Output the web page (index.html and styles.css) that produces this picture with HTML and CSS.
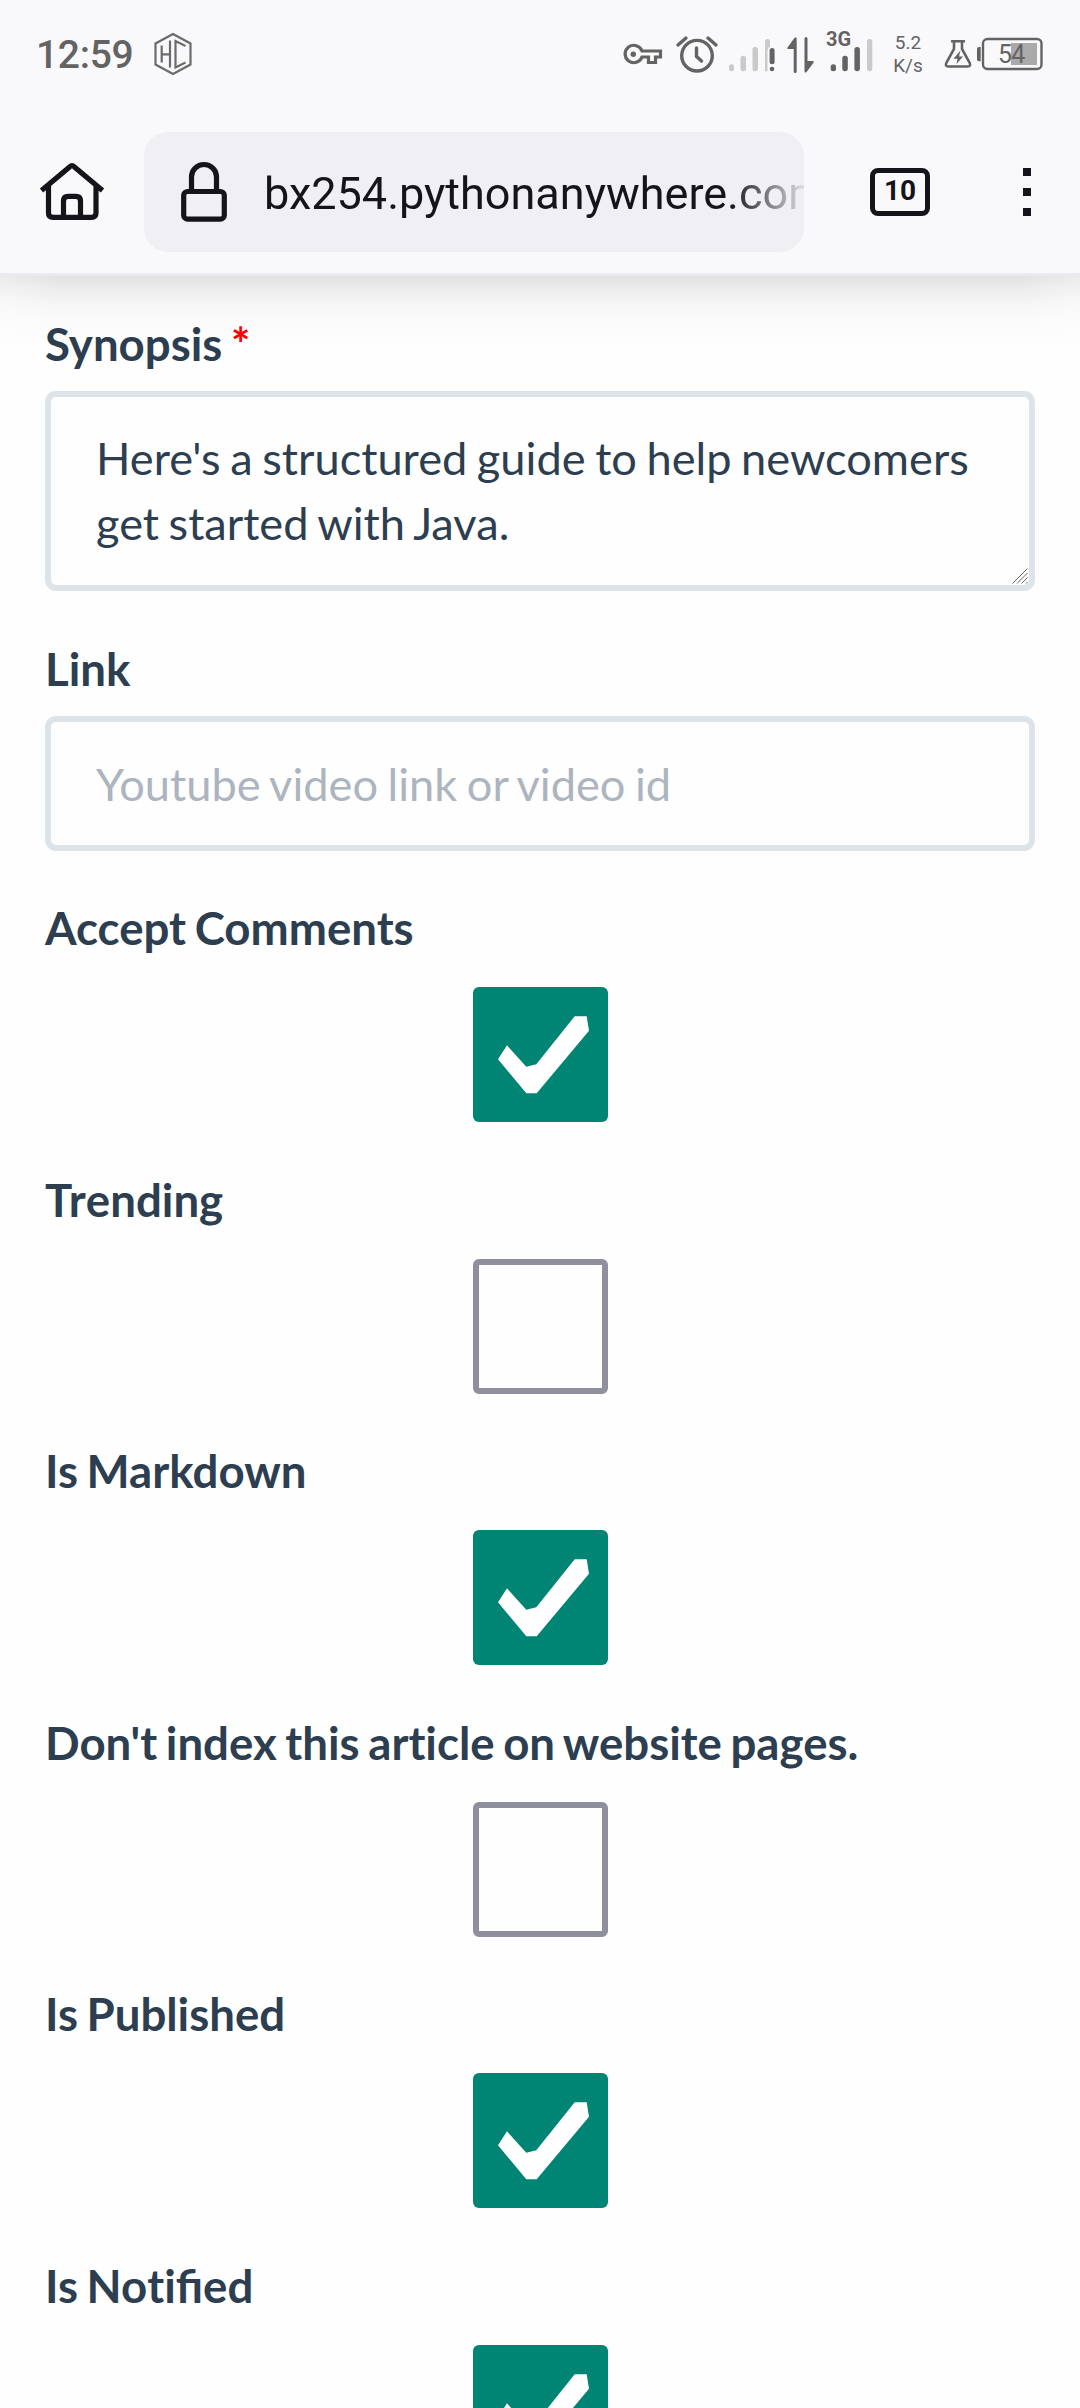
FILE: index.html
```html
<!DOCTYPE html>
<html lang="en">
<head>
<meta charset="utf-8">
<title>Edit article</title>
<link rel="stylesheet" href="styles.css">
</head>
<body>
<header class="chrome">
  <div class="status">
    <span class="clock">12:59</span>
    <svg class="hc" width="38" height="48" viewBox="154 30 38 48"><path d="M173 34 190.500 43.500V64.500L173 74 155.500 64.500V43.500Z"/><path d="M161.700 45.500V62.500M161.700 54.300H170M170 40.500V67.500M185.500 46 175.500 41V67.500L185.500 62.500"/></svg>
    <svg class="key" width="40" height="48" viewBox="623 30 40 48"><path d="M642 51H660.500V57H655.500V62.500H648.500V57H642A8.700 8.700 0 1 1 642 51Z"/><circle class="solid" cx="633.300" cy="54.200" r="2.700"/></svg>
    <svg class="alarm" width="42" height="48" viewBox="676 30 42 48"><circle cx="697" cy="55.700" r="15.300"/><path d="M696.500 48V56.500L701.500 61M678 45 686 38M716 45 708 38"/></svg>
    <svg class="sig1" width="48" height="48" viewBox="728 30 48 48"><g class="faint"><rect x="729" y="64.300" width="5" height="7" rx="2.500"/><rect x="740.500" y="55.700" width="5.500" height="15.500" rx="2.600"/><rect x="752.500" y="47" width="5.500" height="24.200" rx="2.600"/><path d="M765 71.200V41.500a2.500 2.500 0 0 1 5 0V46.500Q767.500 48 767.500 51V71.200Z"/></g><rect x="769.600" y="48" width="5" height="16.300" rx="2.500"/><circle cx="772" cy="69" r="2.300"/></svg>
    <svg class="arrows" width="28" height="48" viewBox="787 30 28 48"><path d="M796.700 71.500a1.500 1.500 0 0 1-3-0V49H788q-1.300-.5-.5-1.500L794 38.500q2.700-3 2.700 1ZM804.500 38.500a1.500 1.500 0 0 1 3 0V61H813q1.500.5.5 1.800L807 71.500q-2.500 2.500-2.500-.5Z"/></svg>
    <svg class="sig2" width="48" height="48" viewBox="826 30 48 48"><text class="net" x="826" y="46">3G</text><rect x="830.700" y="64.300" width="5.300" height="7" rx="2.500"/><rect x="842.300" y="55.700" width="5.500" height="15.500" rx="2.600"/><rect x="854.400" y="47" width="5.500" height="24.200" rx="2.600"/><rect class="faint" x="867" y="39" width="5.300" height="32.200" rx="2.600"/></svg>
    <span class="speed">5.2<br>K/s</span>
    <svg class="flask" width="28" height="48" viewBox="944 30 28 48"><path d="M952 41.300H964M954 41.300V49L946.500 62.500Q944.500 66.500 948.500 66.500H967.500Q971.500 66.500 969.500 62.500L962 49V41.300"/><path class="solid" d="M960.500 50.500 953.500 58.700H957.500L956.500 64 963 56.500H959Z"/></svg>
    <svg class="battery" width="68" height="48" viewBox="976 30 68 48"><path d="M980.700 47V61.300H979a2 2 0 0 1-2-2V49a2 2 0 0 1 2-2Z"/><rect class="charge" x="1011" y="43" width="26" height="22"/><rect class="case" x="983" y="39" width="58.500" height="30" rx="4.500"/><text class="level" x="998" y="62.700">54</text></svg>
  </div>
  <div class="toolbar">
    <svg class="home" width="66" height="60" viewBox="39 161 66 60"><path d="M41.500 189.500 69.500 166Q72 163.500 74.500 166L102.500 189.500M48.500 185V212Q48.500 216.300 53 216.300H91.500Q96 216.300 96 212V185M63.500 216V200Q63.500 195.300 68 195.300H76Q80.500 195.300 80.500 200V216"/></svg>
    <div class="address">
      <svg class="lock" width="46" height="62" viewBox="181 161 46 62"><path d="M191.500 190V177a12.500 12.500 0 0 1 25 0V190"/><rect x="183.700" y="191.500" width="40.600" height="27.700" rx="4"/></svg>
      <span class="url">bx254.pythonanywhere.com</span>
    </div>
    <span class="tabs">10</span>
    <span class="menu"><i></i><i></i><i></i></span>
  </div>
</header>
<form class="form">
  <div class="field">
    <label>Synopsis <span class="required">*</span></label>
    <div class="area">
      <textarea class="control" rows="2">Here's a structured guide to help newcomers get started with Java.</textarea>
      <svg class="grip" width="16" height="16" viewBox="0 0 16 16"><path d="M.5 15.500 15.500.5M5 15.500 15.500 5M9.500 15.500 15.500 9.500M14 15.500 15.500 14"/></svg>
    </div>
  </div>
  <div class="field">
    <label>Link</label>
    <input class="control" type="text" placeholder="Youtube video link or video id">
  </div>
  <div class="field toggle">
    <label>Accept Comments</label>
    <span class="box checked"><svg viewBox="0 0 135 135"><path d="M25 72.300 34 58.300 53.300 79.700 63.300 77.300 101.700 29.300H113.700L116 43.700 63.700 106.300H53.300Z"/></svg></span>
  </div>
  <div class="field toggle">
    <label class="unkerned"><span class="initial">T</span>rending</label>
    <span class="box"></span>
  </div>
  <div class="field toggle">
    <label>Is Markdown</label>
    <span class="box checked"><svg viewBox="0 0 135 135"><path d="M25 72.300 34 58.300 53.300 79.700 63.300 77.300 101.700 29.300H113.700L116 43.700 63.700 106.300H53.300Z"/></svg></span>
  </div>
  <div class="field toggle">
    <label>Don't index this ar<span class="solo">t</span>icle on website pages.</label>
    <span class="box"></span>
  </div>
  <div class="field toggle">
    <label>Is Published</label>
    <span class="box checked"><svg viewBox="0 0 135 135"><path d="M25 72.300 34 58.300 53.300 79.700 63.300 77.300 101.700 29.300H113.700L116 43.700 63.700 106.300H53.300Z"/></svg></span>
  </div>
  <div class="field toggle">
    <label>Is No<span class="solo">ti</span>fied</label>
    <span class="box checked"><svg viewBox="0 0 135 135"><path d="M25 72.300 34 58.300 53.300 79.700 63.300 77.300 101.700 29.300H113.700L116 43.700 63.700 106.300H53.300Z"/></svg></span>
  </div>
</form>
</body>
</html>
```
FILE: styles.css
```css
* { box-sizing: border-box; }
body {
  margin: 0;
  width: 1080px;
  height: 2408px;
  overflow: hidden;
  background: #fefefe;
  font-family: Lato, "Liberation Sans", sans-serif;
  color: #2c3e50;
}
svg { display: block; flex: none; overflow: visible; }

.chrome {
  position: relative;
  height: 276px;
  background: #f9f9fb;
  border-bottom: 3px solid #ebebef;
  font-family: Roboto, "Liberation Sans", sans-serif;
}
/* soft shadow the toolbar casts over the page */
.chrome::after {
  content: "";
  position: absolute;
  left: 0;
  right: 0;
  top: 276px;
  height: 72px;
  background: linear-gradient(rgba(0,0,0,.115), rgba(0,0,0,.07) 18%, rgba(0,0,0,.035) 38%, rgba(0,0,0,.012) 65%, transparent);
  mask-image: linear-gradient(90deg, rgba(0,0,0,.65), #000 60px, #000 1020px, rgba(0,0,0,.65));
}

.status {
  display: flex;
  height: 132px;
  padding: 30px 36px 0 36px;
  color: #636363;
}
.status svg { fill: #636363; stroke: none; }
.clock { width: 118px; font-size: 39px; font-weight: 500; line-height: 50px; letter-spacing: -.3px; }
.status .hc { fill: none; stroke: #6b6b6b; stroke-width: 2.2; }
.status .key { margin-left: 431px; fill: none; stroke: #636363; stroke-width: 3.2; }
.status .solid { fill: #636363; stroke: none; }
.status .alarm { margin-left: 13px; fill: none; stroke: #636363; stroke-width: 3.4; stroke-linecap: round; stroke-linejoin: round; }
.status .sig1 { margin-left: 10px; }
.status .arrows { margin-left: 11px; }
.status .sig2 { margin-left: 11px; }
.status .faint { fill: #cacaca; }
.net { font-size: 20px; font-weight: 700; }
.speed { width: 44px; margin: 1px 0 0 12px; font-size: 19px; line-height: 23px; text-align: center; }
.status .flask { margin-left: 14px; fill: none; stroke: #636363; stroke-width: 2.6; stroke-linecap: round; }
.status .battery { margin-left: 4px; }
.status .case { fill: none; stroke: #636363; stroke-width: 2.4; }
.status .charge { fill: #aaa; }
.level { font-size: 25px; font-weight: 400; letter-spacing: -.7px; }

.toolbar { display: flex; align-items: center; height: 120px; padding-left: 39px; }
.home, .lock { fill: none; stroke: #15141a; stroke-width: 5.2; }
.address {
  display: flex;
  align-items: center;
  width: 660px;
  height: 120px;
  margin-left: 39px;
  padding-left: 37px;
  border-radius: 24px;
  background: #f0eff4;
}
.url {
  flex: 1;
  margin-left: 37px;
  padding-top: 4px;
  overflow: hidden;
  white-space: nowrap;
  font-size: 45px;
  line-height: 60px;
  color: #15141a;
  mask-image: linear-gradient(90deg, #000 calc(100% - 74px), rgba(0,0,0,.08));
}
.tabs {
  width: 60px;
  height: 48px;
  margin-left: 66px;
  border: 5px solid #15141a;
  border-radius: 8px;
  font-size: 28px;
  font-weight: 700;
  line-height: 36px;
  text-align: center;
  color: #15141a;
}
.menu { display: grid; gap: 12px; margin-left: 93px; }
.menu i { width: 8px; height: 8px; background: #15141a; }

.form {
  display: flex;
  flex-direction: column;
  gap: 45.5px;
  padding: 35.8px 45px 0;
  font-size: 45px;
  line-height: 64.8px;
}
.field { display: grid; gap: 14.2px; }
.field label { height: 64.8px; font-size: 45.6px; font-weight: 700; word-spacing: -2.5px; }
.solo { font-variant-ligatures: none; }
.unkerned { font-kerning: none; }
.initial { letter-spacing: -3.500px; }
.required { color: #f00; }
.control {
  display: block;
  width: 100%;
  margin: 0;
  padding: 29.5px 44px 28.5px 45px;
  border: 6px solid #dce4e9;
  border-radius: 11px;
  background: transparent;
  font: inherit;
  font-size: 45.2px;
  color: inherit;
  word-spacing: -2px;
  resize: none;
  overflow: hidden;
  outline: none;
}
textarea.control { height: 200.400px; }
input.control { height: 135px; }
.control::placeholder { color: #acb5bf; opacity: 1; }
.area { position: relative; }
.grip { position: absolute; right: 7px; bottom: 7px; fill: none; stroke: #666; stroke-width: 1; }
.toggle { gap: 26.2px; }
.box {
  width: 135px;
  height: 135px;
  justify-self: center;
  border: 6px solid #8f8f9d;
  border-radius: 6px;
}
.checked { border: 0; background: #008575; }
.checked path { fill: #fff; }
```
